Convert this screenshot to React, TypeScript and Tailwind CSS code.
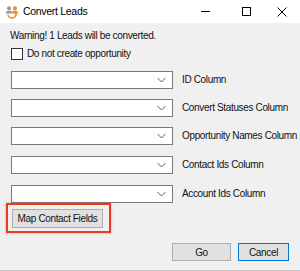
import React from "react";

const fields = [
  { label: "ID Column", mt: "mt-[11px]" },
  { label: "Convert Statuses Column", mt: "mt-[10px]" },
  { label: "Opportunity Names Column", mt: "mt-[10px]" },
  { label: "Contact Ids Column", mt: "mt-[11px]" },
  { label: "Account Ids Column", mt: "mt-[11px]" },
];

const txt = "text-[10px] tracking-[-0.35px] text-[#111] whitespace-nowrap";

function AppIcon() {
  return (
    <svg width="14" height="14" viewBox="0 0 14 14">
      <circle cx="4" cy="3.2" r="2" fill="#9a9a9a" />
      <path d="M0.8 8.5 C1 6.2 2.3 5.6 4 5.6 C5.7 5.6 7 6.2 7.2 8.5 Z" fill="#9a9a9a" />
      <circle cx="10" cy="3.2" r="2" fill="#f08a24" />
      <path d="M6.8 8.5 C7 6.2 8.3 5.6 10 5.6 C11.7 5.6 13 6.2 13.2 8.5 Z" fill="#f08a24" />
      <path d="M3 9.5 A4 3.5 0 0 0 11 9.5" fill="none" stroke="#f08a24" strokeWidth="1.4" />
      <path d="M9.8 8.4 L11.6 9.8 L10 11" fill="none" stroke="#f08a24" strokeWidth="1.2" />
    </svg>
  );
}

function Combo({ label, mt }: { label: string; mt: string }) {
  return (
    <div className={`flex items-center ${mt}`}>
      <div className="ml-[11px] shrink-0 w-[162px] h-[18px] bg-white border border-[#7a7a7a] flex items-center justify-end pr-[6px]">
        <svg width="9" height="6" viewBox="0 0 9 6">
          <path d="M0.5 1 L4.5 5 L8.5 1" fill="none" stroke="#606060" strokeWidth="1" />
        </svg>
      </div>
      <span className={`ml-[9px] leading-none ${txt}`}>{label}</span>
    </div>
  );
}

export default function App() {
  return (
    <div
      className="w-[300px] h-[271px] flex flex-col bg-[#f0f0f0] overflow-hidden"
      style={{ fontFamily: '"Liberation Sans", Arial, sans-serif' }}
    >
      <div className="h-[23px] bg-white flex items-center shrink-0">
        <div className="ml-[5px] mt-[1px]">
          <AppIcon />
        </div>
        <span className="ml-[4px] text-[10.5px] tracking-[-0.3px] text-black whitespace-nowrap">Convert Leads</span>
        <div className="ml-auto flex items-center h-full">
          <div className="w-[45px] h-full flex items-center justify-center">
            <div className="w-[9px] h-[1px] bg-black" />
          </div>
          <div className="w-[36px] h-full flex items-center justify-center">
            <div className="w-[9px] h-[9px] border border-black" />
          </div>
          <div className="w-[36px] h-full flex items-center justify-center">
            <svg width="10" height="10" viewBox="0 0 10 10">
              <path d="M0.5 0.5 L9.5 9.5 M9.5 0.5 L0.5 9.5" stroke="#000" strokeWidth="1" />
            </svg>
          </div>
        </div>
      </div>

      <div className="flex-1 flex flex-col border-b border-[#c8c8c8]">
        <div className={`mt-[6px] ml-[10px] leading-[13px] ${txt}`}>
          Warning! 1 Leads will be converted.
        </div>
        <div className="mt-[6px] ml-[11px] flex items-center">
          <div className="w-[12px] h-[12px] bg-white border border-[#333]" />
          <span className={`ml-[4px] leading-none ${txt}`}>Do not create opportunity</span>
        </div>

        {fields.map((f) => (
          <Combo key={f.label} label={f.label} mt={f.mt} />
        ))}

        <div className="ml-[6px] w-[105px] h-[30px] border-[2px] border-[#ee3a20] flex items-center shadow-[0_0_2px_rgba(238,58,32,0.5)]">
          <div className={`ml-[4px] w-[91px] h-[19px] bg-[#e1e1e1] border border-[#adadad] flex items-center justify-center ${txt}`}>
            Map Contact Fields
          </div>
        </div>

        <div className="mt-[10px] flex justify-end pr-[11px] gap-[7px]">
          <div className={`w-[59px] h-[18px] bg-[#e1e1e1] border border-[#adadad] flex items-center justify-center ${txt}`}>
            Go
          </div>
          <div className={`w-[51px] h-[18px] bg-[#e1e1e1] border border-[#0078d7] flex items-center justify-center ${txt}`}>
            Cancel
          </div>
        </div>
      </div>
    </div>
  );
}
